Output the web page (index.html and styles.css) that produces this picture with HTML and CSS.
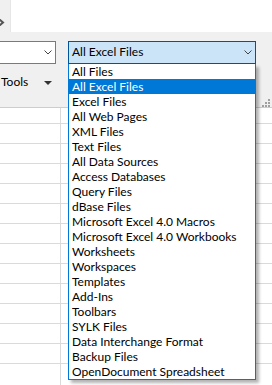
FILE: index.html
```html
<!DOCTYPE html>
<html lang="en">
<head>
    <meta charset="UTF-8">
    <meta name="viewport" content="width=device-width, initial-scale=1.0">
    <title>File type filter</title>
    <link rel="stylesheet" href="styles.css">
</head>
<body>

    <!-- strip above the toolbar -->
    <div class="top">
        <div class="top-tab">
            <svg class="tab-arrow" width="6" height="7" viewBox="0 0 6 7"><polyline points="0.5,0.5 4,3.5 0.5,6.5" fill="none" stroke="#555" stroke-width="2"/></svg>
        </div>
    </div>

    <!-- dialog footer bar -->
    <div class="band">
        <div class="left-col">
            <div class="combo combo-plain">
                <svg width="8" height="5" viewBox="0 0 8 5"><polyline points="0.5,0.5 4,4 7.5,0.5" fill="none" stroke="#444" stroke-width="1"/></svg>
            </div>
            <div class="tools">
                <span>Tools</span>
                <svg width="8" height="4" viewBox="0 0 8 4"><polygon points="0,0 8,0 4,4" fill="#333"/></svg>
            </div>
        </div>

        <div class="filter">
            <div class="combo combo-open">
                <span>All Excel Files</span>
                <svg width="8" height="5" viewBox="0 0 8 5"><polyline points="0.5,0.5 4,4 7.5,0.5" fill="none" stroke="#444" stroke-width="1"/></svg>
            </div>
            <ul class="list">
                <li>All Files</li>
                <li class="selected">All Excel Files</li>
                <li>Excel Files</li>
                <li>All Web Pages</li>
                <li>XML Files</li>
                <li>Text Files</li>
                <li>All Data Sources</li>
                <li>Access Databases</li>
                <li>Query Files</li>
                <li>dBase Files</li>
                <li>Microsoft Excel 4.0 Macros</li>
                <li>Microsoft Excel 4.0 Workbooks</li>
                <li>Worksheets</li>
                <li>Workspaces</li>
                <li>Templates</li>
                <li>Add-Ins</li>
                <li>Toolbars</li>
                <li>SYLK Files</li>
                <li>Data Interchange Format</li>
                <li>Backup Files</li>
                <li>OpenDocument Spreadsheet</li>
            </ul>
        </div>

        <svg class="grip" width="8" height="8" viewBox="0 0 8 8">
            <rect x="6" y="0" width="2" height="2" fill="#a0a0a0"/>
            <rect x="3" y="3" width="2" height="2" fill="#a0a0a0"/>
            <rect x="6" y="3" width="2" height="2" fill="#a0a0a0"/>
            <rect x="0" y="6" width="2" height="2" fill="#a0a0a0"/>
            <rect x="3" y="6" width="2" height="2" fill="#a0a0a0"/>
            <rect x="6" y="6" width="2" height="2" fill="#a0a0a0"/>
        </svg>
    </div>

    <!-- worksheet behind the dialog -->
    <div class="grid"></div>

</body>
</html>
```

FILE: styles.css
```css
html, body {
    margin: 0;
    padding: 0;
}
body {
    width: 272px;
    height: 385px;
    overflow: hidden;
    display: flex;
    flex-direction: column;
    font-family: Lato, "Noto Sans", sans-serif;
    font-size: 12px;
    color: #000;
    background: #fff;
}

.top {
    height: 32px;
    display: flex;
    flex-shrink: 0;
}
.top-tab {
    width: 10px;
    background-color: #f0f0f0;
    border-right: 1px solid #e6e6e6;
    display: flex;
    align-items: flex-start;
}
.tab-arrow {
    margin-top: 19px;
    margin-left: -1px;
}

.band {
    height: 76px;
    box-sizing: border-box;
    flex-shrink: 0;
    background-color: #f0f0f0;
    border-bottom: 1px solid #cdcdcd;
    padding-top: 9px;
    display: flex;
    position: relative;
    z-index: 1;
}

.left-col {
    width: 59px;
    margin-left: -3px;
    display: flex;
    flex-direction: column;
}
.combo {
    height: 23px;
    box-sizing: border-box;
    display: flex;
    align-items: center;
    justify-content: space-between;
}
.combo-plain {
    background-color: #fff;
    border: 1px solid #7a7a7a;
    justify-content: flex-end;
    padding-right: 3px;
}
.tools {
    margin-top: 10px;
    line-height: 15px;
    padding-left: 4px;
    padding-right: 4px;
    display: flex;
    align-items: center;
    justify-content: space-between;
}
.tools svg {
    margin-top: 2px;
}

.filter {
    width: 188px;
    margin-left: 12px;
    position: relative;
}
.combo-open {
    background-color: #cce4f7;
    border: 1px solid #005499;
    padding-left: 3px;
    padding-right: 3px;
}
.combo-open span {
    line-height: 15px;
    margin-top: -2px;
}
.list {
    position: absolute;
    top: 23px;
    left: 0;
    width: 188px;
    box-sizing: border-box;
    margin: 0;
    padding: 0;
    list-style: none;
    background-color: #fff;
    border: 1px solid #0078d7;
    border-top: none;
    box-shadow: 3px 3px 3px rgba(0, 0, 0, 0.3);
}
.list li {
    height: 15px;
    line-height: 15px;
    padding-left: 3px;
    white-space: nowrap;
}
.list li.selected {
    background-color: #0078d7;
    color: #fff;
}

.grip {
    margin-left: auto;
    margin-right: 2px;
    align-self: flex-end;
    margin-bottom: 0;
}

.grid {
    flex: 1;
    background-color: #fff;
    background-image:
        linear-gradient(to right, transparent 60px, #dadada 60px, #dadada 61px, transparent 61px),
        repeating-linear-gradient(to bottom, transparent 0, transparent 19px, #dadada 19px, #dadada 20px);
    background-position: 0 0, 0 -4px;
}
```
